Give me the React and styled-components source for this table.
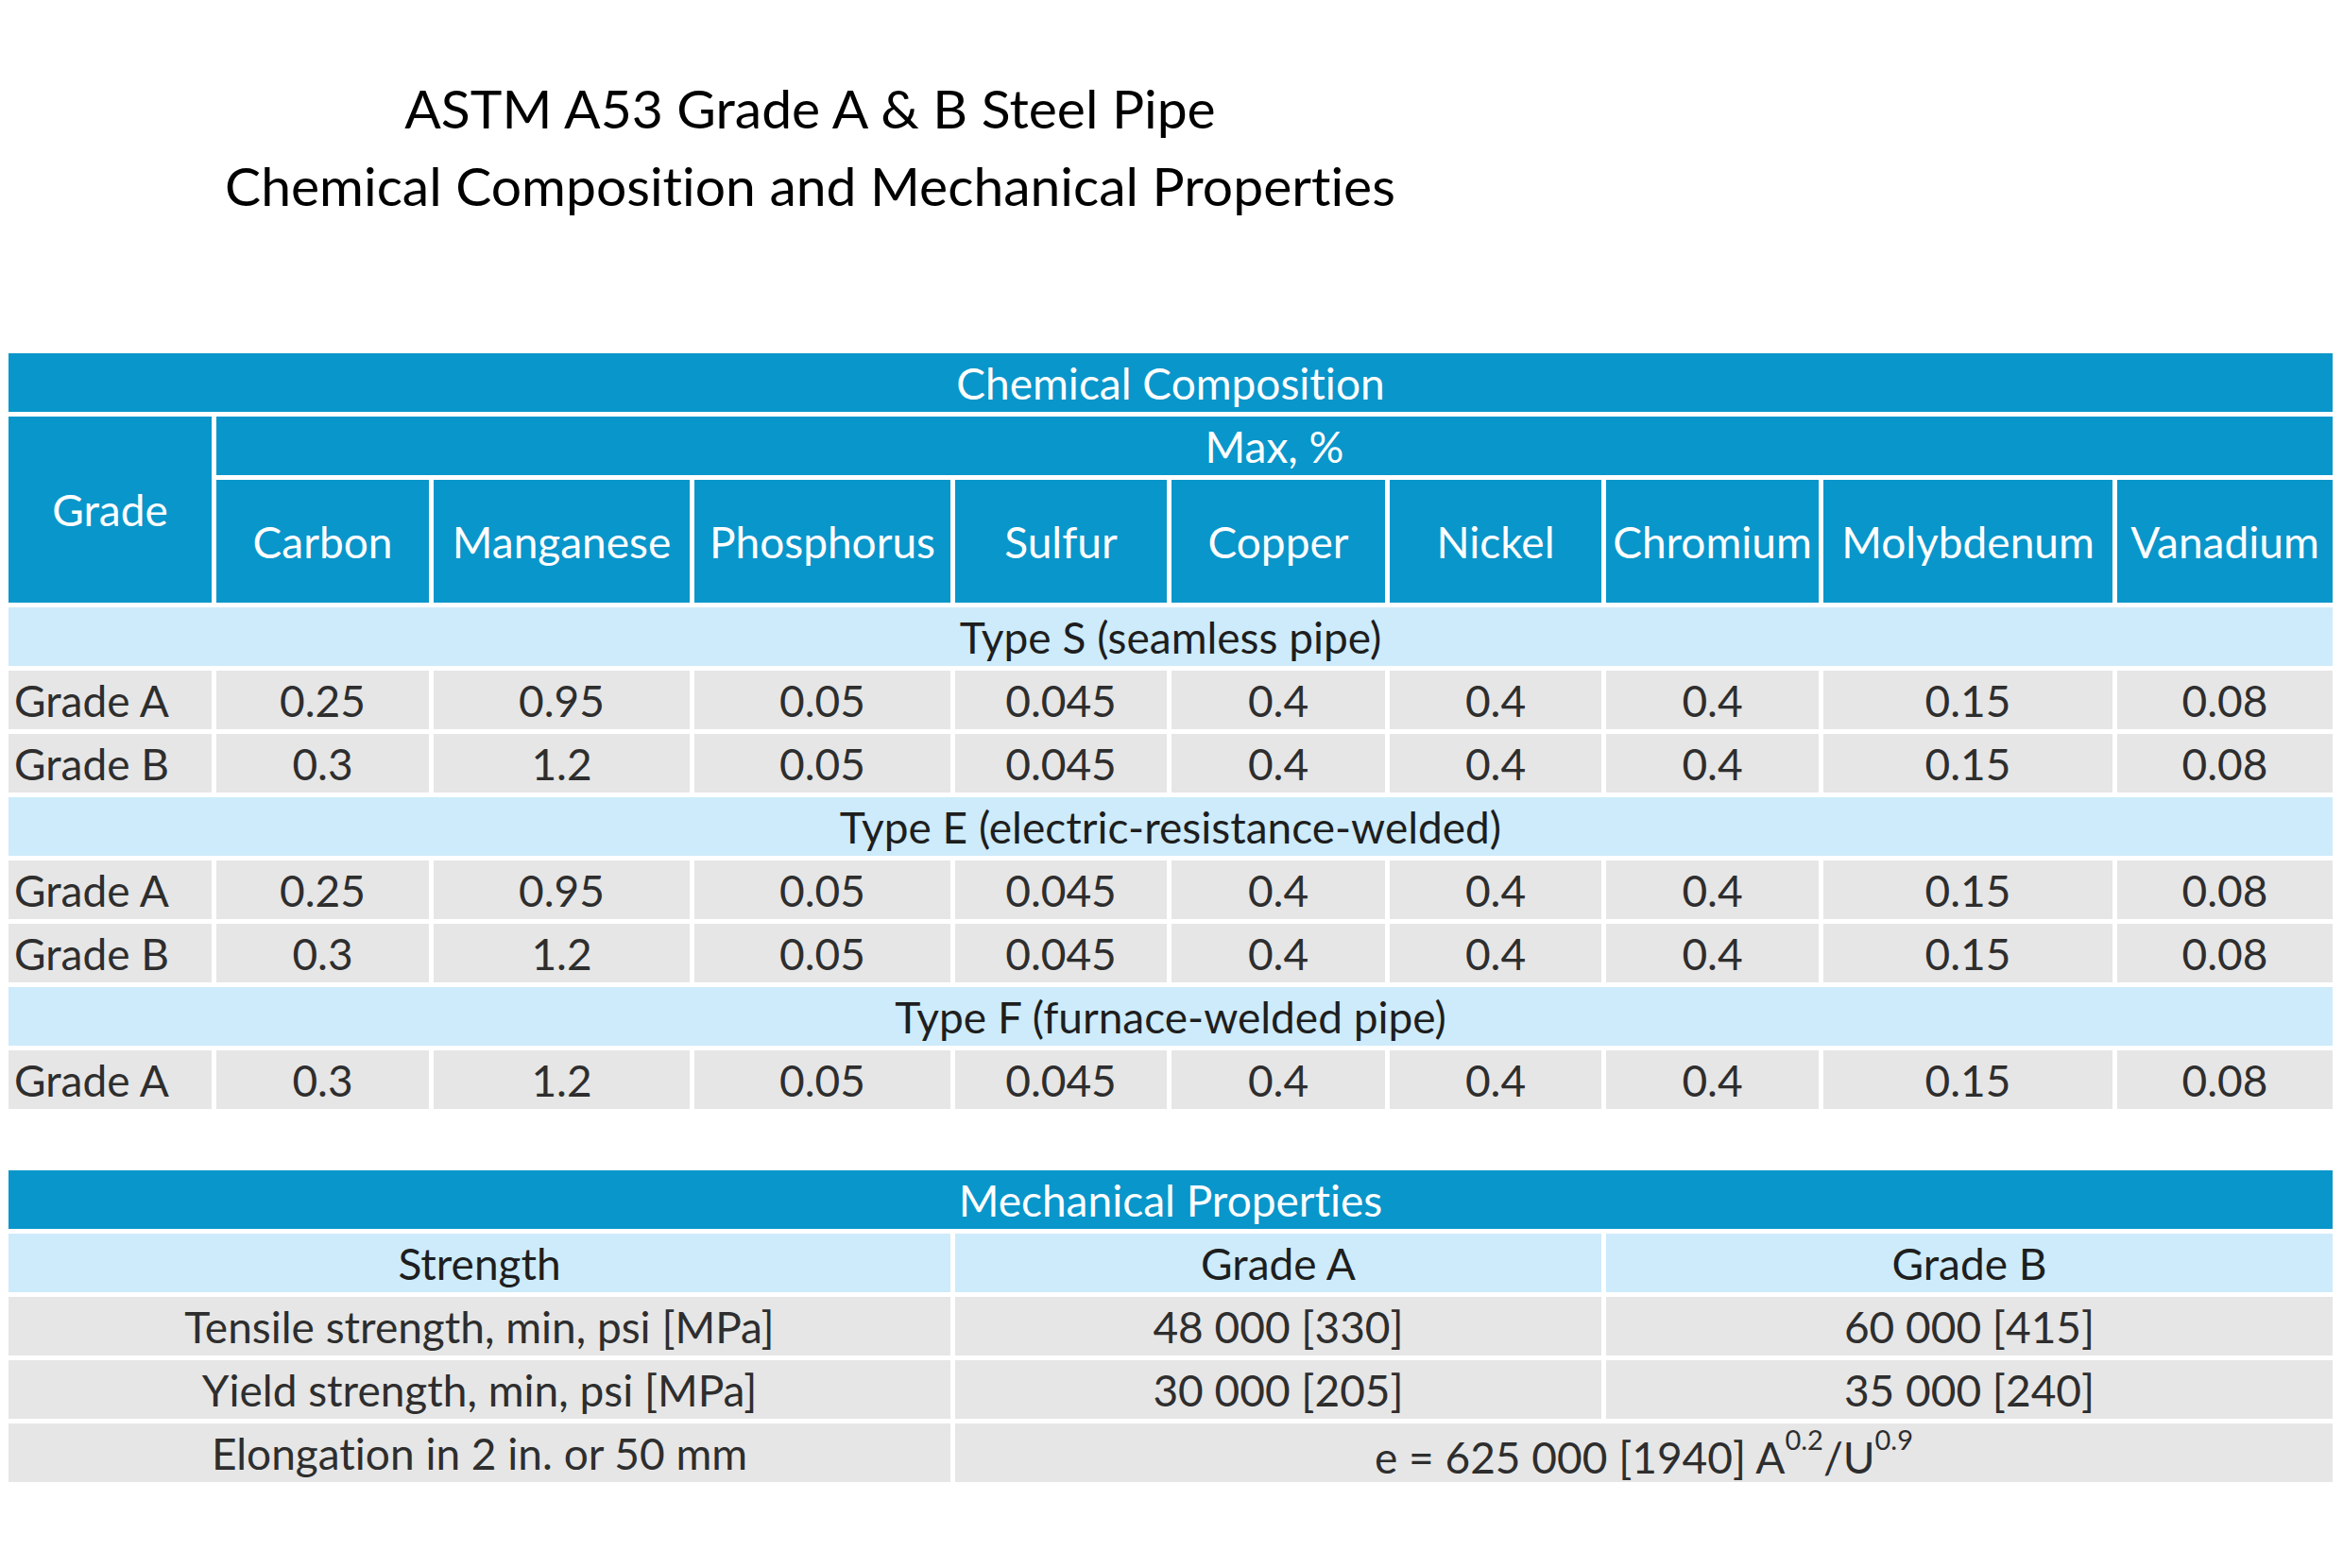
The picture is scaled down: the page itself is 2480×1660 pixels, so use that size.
import React from "react";
import { styled, createGlobalStyle } from "styled-components";

const GlobalStyle = createGlobalStyle`
  html, body {
    margin: 0;
    padding: 0;
    background: #ffffff;
  }
  body {
    font-family: Lato, "Open Sans", "Noto Sans", sans-serif;
    font-variant-ligatures: none;
  }
`;

const COLS = "215px 225px 271px 271px 224px 226px 224px 225px 306px 228px";

const elements = [
  "Carbon",
  "Manganese",
  "Phosphorus",
  "Sulfur",
  "Copper",
  "Nickel",
  "Chromium",
  "Molybdenum",
  "Vanadium",
];

const rowA = ["0.25", "0.95", "0.05", "0.045", "0.4", "0.4", "0.4", "0.15", "0.08"];
const rowB = ["0.3", "1.2", "0.05", "0.045", "0.4", "0.4", "0.4", "0.15", "0.08"];

const groups = [
  {
    title: "Type S (seamless pipe)",
    rows: [
      ["Grade A", rowA],
      ["Grade B", rowB],
    ],
  },
  {
    title: "Type E (electric-resistance-welded)",
    rows: [
      ["Grade A", rowA],
      ["Grade B", rowB],
    ],
  },
  {
    title: "Type F (furnace-welded pipe)",
    rows: [["Grade A", rowB]],
  },
];

export default function App() {
  return (
    <Page>
      <GlobalStyle />
      <TitleBlock>
        <TitleLine>ASTM A53 Grade A &amp; B Steel Pipe</TitleLine>
        <TitleLine>Chemical Composition and Mechanical Properties</TitleLine>
      </TitleBlock>

      <ChemGrid>
        <Cell $tone='head' $span='1 / -1'>
          Chemical Composition
        </Cell>
        <Cell $tone='head' $rows='2 / 4'>
          Grade
        </Cell>
        <Cell $tone='head' $span='2 / -1'>
          Max, %
        </Cell>
        {elements.map((el) => (
          <Cell key={el} $tone='head'>
            {el}
          </Cell>
        ))}
        {groups.map((g) => (
          <React.Fragment key={g.title}>
            <Cell $tone='band' $span='1 / -1'>
              {g.title}
            </Cell>
            {g.rows.map(([label, values], i) => (
              <React.Fragment key={g.title + i}>
                <Cell $tone='data' $left>
                  {label}
                </Cell>
                {values.map((v, j) => (
                  <Cell key={j} $tone='data'>
                    {v}
                  </Cell>
                ))}
              </React.Fragment>
            ))}
          </React.Fragment>
        ))}
      </ChemGrid>

      <MechGrid>
        <Cell $tone='head' $span='1 / -1'>
          Mechanical Properties
        </Cell>
        <Cell $tone='band' $span='1 / 5'>
          Strength
        </Cell>
        <Cell $tone='band' $span='5 / 8'>
          Grade A
        </Cell>
        <Cell $tone='band' $span='8 / -1'>
          Grade B
        </Cell>

        <Cell $tone='data' $span='1 / 5'>
          Tensile strength, min, psi [MPa]
        </Cell>
        <Cell $tone='data' $span='5 / 8'>
          48 000 [330]
        </Cell>
        <Cell $tone='data' $span='8 / -1'>
          60 000 [415]
        </Cell>

        <Cell $tone='data' $span='1 / 5'>
          Yield strength, min, psi [MPa]
        </Cell>
        <Cell $tone='data' $span='5 / 8'>
          30 000 [205]
        </Cell>
        <Cell $tone='data' $span='8 / -1'>
          35 000 [240]
        </Cell>

        <Cell $tone='data' $span='1 / 5'>
          Elongation in 2 in. or 50 mm
        </Cell>
        <Cell $tone='data' $span='5 / -1'>
          <Formula>
            e = 625 000 [1940] A<Sup>0.2</Sup>/U<Sup>0.9</Sup>
          </Formula>
        </Cell>
      </MechGrid>
    </Page>
  );
}

const Page = styled.div`
  width: 2480px;
  height: 1660px;
  box-sizing: border-box;
  padding: 73px 11px 0 9px;
  background: #ffffff;
  overflow: hidden;
`;

const TitleBlock = styled.div`
  width: 1697px;
  display: flex;
  flex-direction: column;
  align-items: center;
  margin-bottom: 137px;
`;

const TitleLine = styled.div`
  font-family: Lato, "Open Sans", sans-serif;
  font-size: 57px;
  line-height: 82px;
  color: #000000;
  white-space: nowrap;
`;

const ChemGrid = styled.div`
  display: grid;
  grid-template-columns: ${COLS};
  grid-template-rows: 62px 62px 130px repeat(8, 62px);
  gap: 5px;
`;

const MechGrid = styled.div`
  display: grid;
  grid-template-columns: ${COLS};
  grid-template-rows: repeat(5, 62px);
  gap: 5px;
  margin-top: 65px;
`;

const tones = {
  head: { bg: "#0996cb", fg: "#ffffff" },
  band: { bg: "#cdebfb", fg: "#1e1e1e" },
  data: { bg: "#e6e6e6", fg: "#2e2e2e" },
};

const Cell = styled.div`
  grid-column: ${({ $span }) => $span || "auto"};
  grid-row: ${({ $rows }) => $rows || "auto"};
  background: ${({ $tone }) => tones[$tone].bg};
  color: ${({ $tone }) => tones[$tone].fg};
  display: flex;
  align-items: center;
  justify-content: ${({ $left }) => ($left ? "flex-start" : "center")};
  padding-left: ${({ $left }) => ($left ? "6px" : "0")};
  font-family: Lato, "Open Sans", sans-serif;
  font-size: 46px;
  white-space: nowrap;
  overflow: visible;
`;

const Formula = styled.span`
  display: inline-block;
  padding-top: 8px;
`;

const Sup = styled.sup`
  font-size: 29px;
  vertical-align: 0;
  position: relative;
  top: -25px;
`;
